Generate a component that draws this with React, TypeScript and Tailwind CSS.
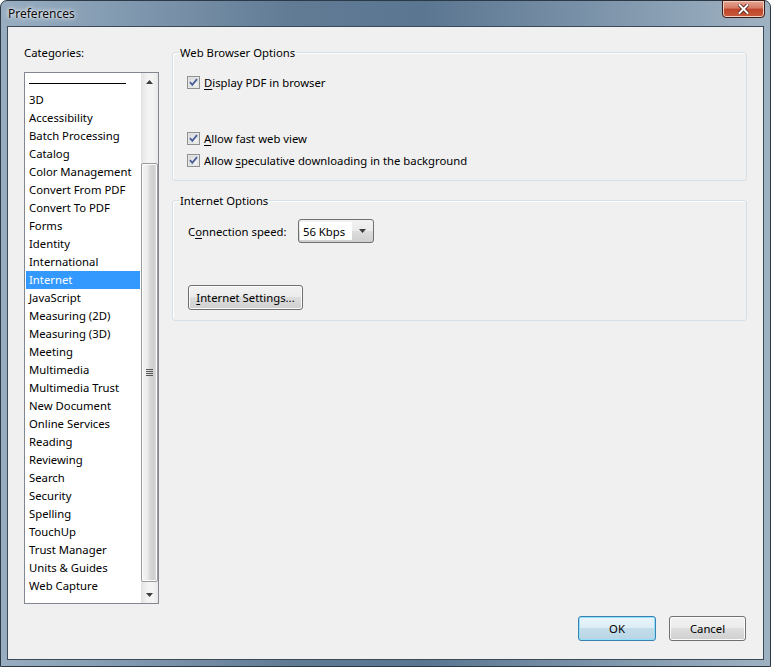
import React from "react";

const categories = [
  "3D", "Accessibility", "Batch Processing", "Catalog", "Color Management",
  "Convert From PDF", "Convert To PDF", "Forms", "Identity", "International",
  "Internet", "JavaScript", "Measuring (2D)", "Measuring (3D)", "Meeting",
  "Multimedia", "Multimedia Trust", "New Document", "Online Services", "Reading",
  "Reviewing", "Search", "Security", "Spelling", "TouchUp", "Trust Manager",
  "Units & Guides", "Web Capture",
];

const font = "font-['Segoe_UI','Noto_Sans',sans-serif] text-[11.3px]";

const CheckBox = () => (
  <svg width="13" height="13" viewBox="0 0 13 13" className="shrink-0">
    <defs>
      <linearGradient id="cbg" x1="0" y1="0" x2="1" y2="1">
        <stop offset="0" stopColor="#d9dadb" />
        <stop offset="1" stopColor="#fbfbfb" />
      </linearGradient>
    </defs>
    <rect x="0.5" y="0.5" width="12" height="12" fill="#f4f4f4" stroke="#8e8f8f" />
    <rect x="2" y="2" width="9" height="9" fill="url(#cbg)" stroke="#c6c8ca" strokeWidth="0.6" />
    <path d="M3 6.2 L5.3 8.8 L10 3.2" fill="none" stroke="#4a5f97" strokeWidth="1.8" />
  </svg>
);

const Check = ({ pre, u, post }: { pre?: string; u: string; post: string }) => (
  <div className="flex items-center h-[18px] gap-[4px]">
    <CheckBox />
    <span className="leading-[17px] pt-[1px]">
      {pre}
      <span className="underline underline-offset-2">{u}</span>
      {post}
    </span>
  </div>
);

const Arrow = ({ up }: { up?: boolean }) => (
  <svg width="7" height="4" viewBox="0 0 7 4">
    <path d={up ? "M3.5 0 L7 4 L0 4 Z" : "M0 0 L7 0 L3.5 4 Z"} fill="#3c3c3c" />
  </svg>
);

const VistaButton = ({ children, primary, w }: { children: React.ReactNode; primary?: boolean; w: string }) => (
  <button
    className={`${w} h-[25px] rounded-[3px] border ${
      primary
        ? "border-[#3c7fb1] bg-[linear-gradient(#eaf5fb_0%,#dcecf5_48%,#c4ddeb_50%,#b8d4e4_100%)] shadow-[inset_0_0_0_1px_#8ee3fb]"
        : "border-[#707070] bg-[linear-gradient(#f2f2f2_0%,#ebebeb_48%,#dddddd_50%,#cfcfcf_100%)] shadow-[inset_0_0_0_1px_#fbfbfb]"
    } text-black flex items-center justify-center pt-[1px]`}
  >
    {children}
  </button>
);

export default function App() {
  return (
    <div className={`w-[771px] h-[667px] ${font} text-black`}>
      <div className="w-full h-full flex flex-col rounded-t-[7px] border border-[#2c3a48] bg-[linear-gradient(90deg,#98adc0_0%,#839bb1_15%,#617b95_38%,#5b7691_55%,#7890a7_75%,#9fb2c2_100%)]">
        {/* title bar */}
        <div className="h-[25px] flex items-start justify-between">
          <div className="pl-[7px] pt-[6px] leading-[14px] text-[12px] text-[#0b0b0b] [text-shadow:0_0_6px_#ffffff,0_0_3px_#ffffff]">
            Preferences
          </div>
          <div className="mt-[-1px] mr-[5px] w-[43px] h-[18px] rounded-b-[4px] border border-[#3b1d18] bg-[linear-gradient(#e8a493_0%,#d47a63_45%,#c0442a_50%,#c85a3b_100%)] shadow-[inset_0_0_0_1px_#eecfc4] flex items-center justify-center">
            <svg width="11" height="10" viewBox="0 0 11 10">
              <path d="M1.5 1 L9.5 9 M9.5 1 L1.5 9" stroke="#4b1a12" strokeWidth="3.6" strokeLinecap="square" />
              <path d="M1.5 1 L9.5 9 M9.5 1 L1.5 9" stroke="#ffffff" strokeWidth="2" strokeLinecap="square" />
            </svg>
          </div>
        </div>

        {/* client area */}
        <div className="mx-[6px] mb-[6px] flex-1 border border-[#3a4a5b] bg-[#f0f0f0] flex flex-col">
          <div className="flex pl-[16px] pt-[17px]">
            {/* categories */}
            <div className="w-[135px] flex flex-col">
              <div className="h-[16px] leading-[15px] pt-[1px]">Categories:</div>
              <div className="mt-[12px] h-[532px] border border-[#828790] bg-white flex">
                <div className="flex-1 px-[1px] flex flex-col">
                  <div className="h-[18px] flex items-center pl-[3px]">
                    <div className="mt-[2px] w-[97px] h-[1px] bg-black" />
                  </div>
                  {categories.map((c) => (
                    <div
                      key={c}
                      className={`h-[18px] leading-[17px] pl-[3px] whitespace-nowrap ${
                        c === "Internet" ? "bg-[#3399ff] text-white" : ""
                      }`}
                    >
                      {c}
                    </div>
                  ))}
                </div>
                {/* scrollbar */}
                <div className="w-[17px] flex flex-col bg-[linear-gradient(90deg,#e3e3e3,#f3f3f3_40%,#f3f3f3_70%,#e8e8e8)]">
                  <div className="h-[17px] flex items-center justify-center">
                    <Arrow up />
                  </div>
                  <div className="flex-1 flex flex-col">
                    <div className="mt-[73px] h-[419px] rounded-[2px] border border-[#9b9b9b] bg-[linear-gradient(90deg,#f5f5f5_0%,#ececec_35%,#d6d6d6_55%,#cfcfcf_80%,#e2e2e2_100%)] shadow-[inset_0_0_0_1px_#fbfbfb] flex flex-col items-center justify-center gap-[1px]">
                      <div className="w-[7px] h-[1px] bg-[#555]" />
                      <div className="w-[7px] h-[1px] bg-[#555]" />
                      <div className="w-[7px] h-[1px] bg-[#555]" />
                      <div className="w-[7px] h-[1px] bg-[#555]" />
                    </div>
                  </div>
                  <div className="h-[17px] flex items-center justify-center">
                    <Arrow />
                  </div>
                </div>
              </div>
            </div>

            {/* options */}
            <div className="ml-[13px] w-[575px] flex flex-col">
              <fieldset className="h-[137px] border border-[#d5dfe5] rounded-[3px] shadow-[inset_1px_1px_0_#ffffff]">
                <legend className="ml-[6px] px-[1px] leading-[15px] pt-[1px]">Web Browser Options</legend>
                <div className="pl-[14px] pt-[13px] flex flex-col">
                  <Check u="D" post="isplay PDF in browser" />
                  <div className="mt-[38px]">
                    <Check u="A" post="llow fast web view" />
                  </div>
                  <div className="mt-[4px]">
                    <Check pre="Allow " u="s" post="peculative downloading in the background" />
                  </div>
                </div>
              </fieldset>

              <fieldset className="mt-[11px] h-[129px] border border-[#d5dfe5] rounded-[3px] shadow-[inset_1px_1px_0_#ffffff]">
                <legend className="ml-[6px] px-[1px] leading-[15px] pt-[1px]">Internet Options</legend>
                <div className="pl-[15px] pt-[11px] flex flex-col">
                  <div className="flex items-center h-[24px]">
                    <div className="w-[110px] pt-[2px]">
                      C<span className="underline underline-offset-2">o</span>nnection speed:
                    </div>
                    <div className="w-[76px] h-[24px] rounded-[3px] border border-[#707070] bg-[linear-gradient(#f2f2f2_0%,#ebebeb_48%,#dddddd_50%,#cfcfcf_100%)] flex items-center p-[1px]">
                      <div className="w-[52px] h-[18px] bg-white leading-[17px] pt-[1px] pl-[3px]">56 Kbps</div>
                      <div className="flex-1 flex items-center justify-center">
                        <Arrow />
                      </div>
                    </div>
                  </div>
                  <div className="mt-[42px]">
                    <VistaButton w="w-[115px]">
                      <span>
                        <span className="underline underline-offset-2">I</span>nternet Settings...
                      </span>
                    </VistaButton>
                  </div>
                </div>
              </fieldset>
            </div>
          </div>

          <div className="flex-1" />
          <div className="flex justify-end gap-[13px] pr-[17px] pb-[18px]">
            <VistaButton primary w="w-[78px]">OK</VistaButton>
            <VistaButton w="w-[77px]">Cancel</VistaButton>
          </div>
        </div>
      </div>
    </div>
  );
}
